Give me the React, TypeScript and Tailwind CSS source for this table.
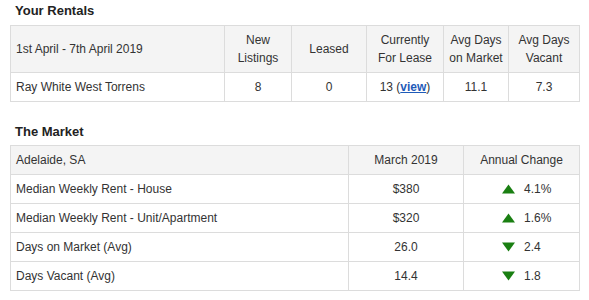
const rentalHeads = [
  "New Listings",
  "Leased",
  "Currently For Lease",
  "Avg Days on Market",
  "Avg Days Vacant",
];

const market = [
  { label: "Median Weekly Rent - House", value: "$380", up: true, change: "4.1%" },
  { label: "Median Weekly Rent - Unit/Apartment", value: "$320", up: true, change: "1.6%" },
  { label: "Days on Market (Avg)", value: "26.0", up: false, change: "2.4" },
  { label: "Days Vacant (Avg)", value: "14.4", up: false, change: "1.8" },
];

function Arrow({ up }: { up: boolean }) {
  return (
    <svg width="13" height="10" viewBox="0 0 13 10" className="block shrink-0">
      {up ? (
        <polygon points="6.5,0.5 13,9.5 0,9.5" fill="#1a7f12" />
      ) : (
        <polygon points="0,0.5 13,0.5 6.5,9.5" fill="#1a7f12" />
      )}
    </svg>
  );
}

const cell = "border border-[#dcdcdc] px-[5px] py-[5px] align-middle";

export default function App() {
  return (
    <div
      className="w-[589px] h-[300px] bg-white px-[10px] pt-[2px] text-[12px] leading-[18px] text-[#333]"
      style={{ fontFamily: '"Liberation Sans", Arial, sans-serif' }}
    >
      <h2 className="pl-[5px] mb-[6px] text-[13px] font-bold leading-[17px] text-[#222]">
        Your Rentals
      </h2>
      <table className="table-fixed border-collapse w-[569px]">
        <colgroup>
          <col className="w-[214px]" />
          <col className="w-[67px]" />
          <col className="w-[75px]" />
          <col className="w-[77px]" />
          <col className="w-[65px]" />
          <col className="w-[71px]" />
        </colgroup>
        <thead>
          <tr className="bg-[#f4f4f4]">
            <th className={`${cell} text-left font-normal`}>1st April - 7th April 2019</th>
            {rentalHeads.map((h) => (
              <th key={h} className={`${cell} text-center font-normal`}>
                {h}
              </th>
            ))}
          </tr>
        </thead>
        <tbody>
          <tr>
            <td className={cell}>Ray White West Torrens</td>
            <td className={`${cell} text-center`}>8</td>
            <td className={`${cell} text-center`}>0</td>
            <td className={`${cell} text-center`}>
              13 (
              <a href="#" className="font-bold text-[#1f5bb8] underline">
                view
              </a>
              )
            </td>
            <td className={`${cell} text-center`}>11.1</td>
            <td className={`${cell} text-center`}>7.3</td>
          </tr>
        </tbody>
      </table>

      <h2 className="pl-[5px] mt-[21px] mb-[5px] text-[13px] font-bold leading-[17px] text-[#222]">
        The Market
      </h2>
      <table className="table-fixed border-collapse w-[569px]">
        <colgroup>
          <col className="w-[338px]" />
          <col className="w-[115px]" />
          <col className="w-[116px]" />
        </colgroup>
        <thead>
          <tr className="bg-[#f4f4f4]">
            <th className={`${cell} text-left font-normal`}>Adelaide, SA</th>
            <th className={`${cell} text-center font-normal`}>March 2019</th>
            <th className={`${cell} text-center font-normal`}>Annual Change</th>
          </tr>
        </thead>
        <tbody>
          {market.map((r) => (
            <tr key={r.label}>
              <td className={cell}>{r.label}</td>
              <td className={`${cell} text-center`}>{r.value}</td>
              <td className={`${cell} pl-[38px]`}>
                <div className="flex items-center gap-[9px]">
                  <Arrow up={r.up} />
                  <span>{r.change}</span>
                </div>
              </td>
            </tr>
          ))}
        </tbody>
      </table>
    </div>
  );
}
